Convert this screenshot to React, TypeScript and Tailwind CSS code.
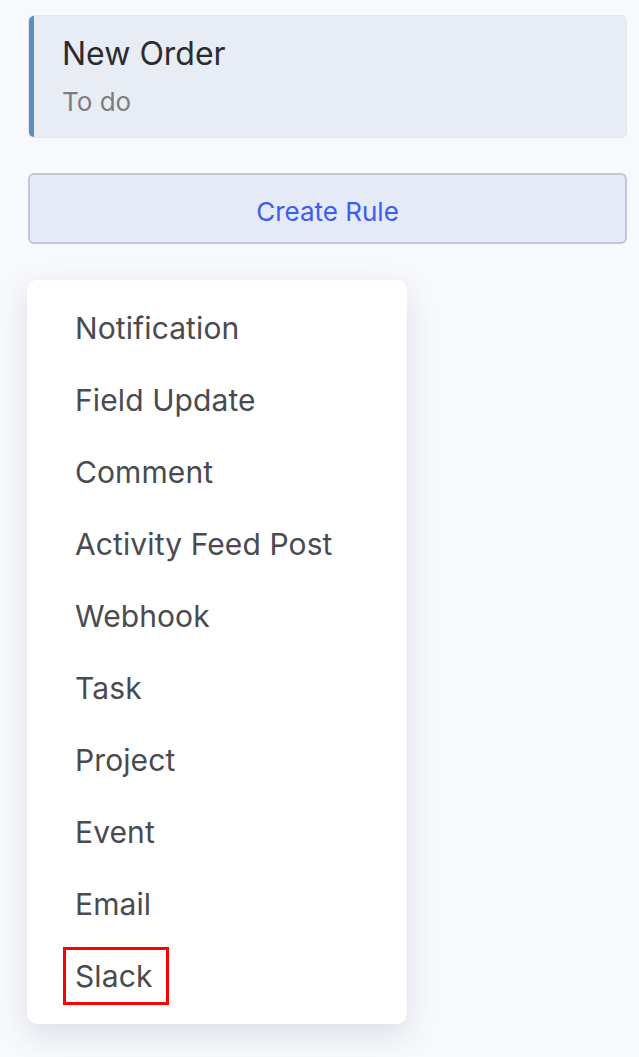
import React from "react";

const items = [
  "Notification",
  "Field Update",
  "Comment",
  "Activity Feed Post",
  "Webhook",
  "Task",
  "Project",
  "Event",
  "Email",
  "Slack",
];

export default function App() {
  return (
    <div
      className="min-h-[1057px] w-[639px] bg-[#f8f9fc] pt-[15px] pl-[28px] pr-[12px]"
      style={{ fontFamily: "Inter, 'Noto Sans', sans-serif" }}
    >
      <div className="flex h-[123px] w-[599px] overflow-hidden rounded-[6px] bg-[#e8edf5] border border-[#e2e7ef]">
        <div className="w-[5px] bg-[#5b8dbd]" />
        <div className="flex flex-col pl-[28px] pt-[18px]">
          <div className="text-[32px] leading-[40px] text-[#2b2b30]">New Order</div>
          <div className="mt-[12px] text-[26px] leading-[32px] text-[#7d7d80]">To do</div>
        </div>
      </div>

      <button className="mt-[35px] flex h-[71px] w-[599px] items-center justify-center rounded-[6px] border-2 border-[#c2c7d6] bg-[#e4eaf8] pt-[5px] text-[26px] text-[#3d5cf0]">
        Create Rule
      </button>

      <div className="mt-[36px] -ml-px w-[380px] rounded-[10px] bg-white py-[12px] shadow-[0_10px_30px_rgba(40,50,90,0.13)]">
        {items.map((it) => (
          <div key={it} className="flex h-[72px] items-center pl-[48px] text-[30px] tracking-[0.1px] text-[#4a4a50]">
            {it === "Slack" ? (
              <span className="-ml-[12px] flex h-[58px] items-center border-[3px] border-[#ff0000] pl-[9px] pr-[14px]">
                {it}
              </span>
            ) : (
              it
            )}
          </div>
        ))}
      </div>
    </div>
  );
}
